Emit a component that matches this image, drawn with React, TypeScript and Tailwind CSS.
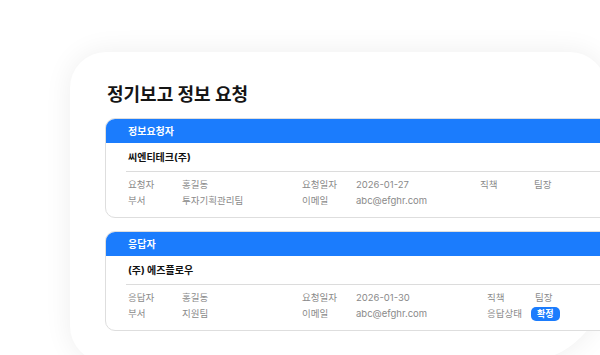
import type { ReactNode } from "react";

type Cell = ReactNode;

interface SectionProps {
  title: string;
  company: string;
  cols: string;
  rows: Cell[][];
}

function Section({ title, company, cols, rows }: SectionProps) {
  return (
    <section className="w-[530px] overflow-hidden rounded-[10px] border border-[#dedede] bg-white">
      <div className="flex h-[24px] items-center bg-[#1b7cfd] pl-[22px] text-[10px] font-bold text-white">
        {title}
      </div>
      <div className="px-[20px]">
        <div className="flex h-[29px] items-center border-b border-[#dcdcdc] pl-[2px] text-[10px] font-bold text-[#111]">
          {company}
        </div>
        <div className={`grid ${cols} pl-[2px] pt-[5px] pb-[8px] text-[9.5px] leading-[16px] text-[#8a8a8a]`}>
          {rows.flat().map((cell, i) => (
            <div key={i} className="whitespace-nowrap">
              {cell}
            </div>
          ))}
        </div>
      </div>
    </section>
  );
}

export default function App() {
  return (
    <div className="h-[355px] w-[600px] overflow-hidden bg-white pl-[70px] pt-[52px] font-['Inter','Noto_Sans_CJK_KR',sans-serif]">
      <div className="h-[310px] w-[536px] rounded-[36px] rounded-br-[85px] bg-white pl-[35px] pt-[31px] shadow-[0_0_28px_rgba(0,0,0,0.07)]">
        <h1 className="pl-[2px] text-[18px] font-bold leading-[24px] text-[#151515]">
          정기보고 정보 요청
        </h1>
        <div className="mt-[11px] flex flex-col gap-[13px]">
          <Section
            title="정보요청자"
            company="씨엔티테크(주)"
            cols="grid-cols-[54px_120px_54px_124px_54px_1fr]"
            rows={[
              ["요청자", "홍길동", "요청일자", "2026-01-27", "직책", "팀장"],
              ["부서", "투자기획관리팀", "이메일", "abc@efghr.com", "", ""],
            ]}
          />
          <Section
            title="응답자"
            company="(주) 에즈플로우"
            cols="grid-cols-[54px_120px_54px_131px_48px_1fr]"
            rows={[
              ["응답자", "홍길동", "요청일자", "2026-01-30", "직책", "팀장"],
              [
                "부서",
                "지원팀",
                "이메일",
                "abc@efghr.com",
                "응답상태",
                <span className="-ml-[4px] inline-flex h-[14px] items-center rounded-[5px] bg-[#1b7cfd] px-[6px] text-[9px] font-bold text-white">
                  확정
                </span>,
              ],
            ]}
          />
        </div>
      </div>
    </div>
  );
}
